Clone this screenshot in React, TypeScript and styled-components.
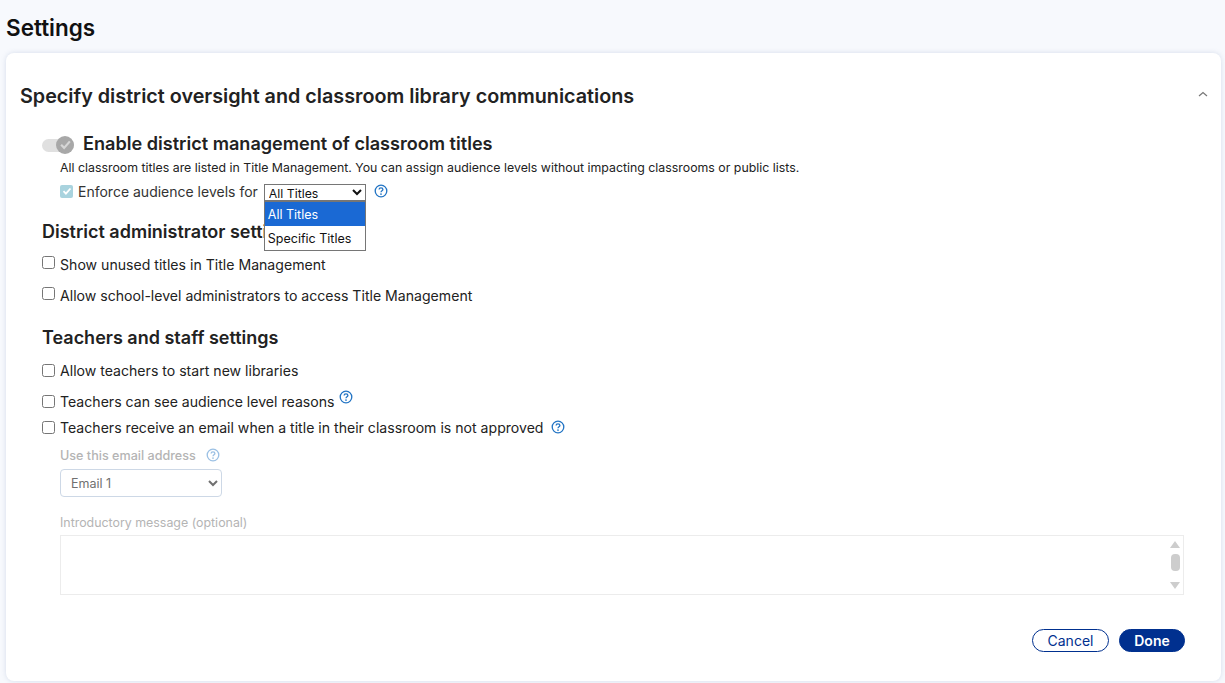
import styled, { createGlobalStyle } from 'styled-components';

const GlobalStyle = createGlobalStyle`
  html, body {
    margin: 0;
    padding: 0;
    background: #f7f9fd;
  }
  body {
    font-family: "Inter", "Liberation Sans", sans-serif;
    color: #1f1f1f;
    height: 683px;
    overflow: hidden;
  }
`;

const Page = styled.div`
  padding: 0 4px 0 6px;
`;

const Title = styled.h1`
  margin: 0;
  height: 53px;
  font-size: 22.5px;
  font-weight: 600;
  line-height: 55px;
  color: #111;
`;

const Card = styled.section`
  height: 628px;
  box-sizing: border-box;
  background: #fff;
  border-radius: 8px;
  box-shadow: 0 0 5px rgba(120, 140, 180, 0.25);
  padding: 30px 14px 0 14px;
`;

const CardHeader = styled.div`
  display: flex;
  justify-content: space-between;
  align-items: center;
  height: 26px;
`;

const CardTitle = styled.h2`
  margin: 0;
  font-size: 19.76px;
  font-weight: 600;
  color: #222;
`;

const Collapse = styled.svg`
  width: 10px;
  height: 6px;
  margin: 0 -1px 5px 0;
  fill: none;
  stroke: #777;
  stroke-width: 1.2;
`;

const Body = styled.div`
  padding: 24px 0 0 22px;
`;

const ToggleRow = styled.div`
  display: flex;
  align-items: center;
  gap: 9px;
  height: 24px;
`;

const Toggle = styled.span`
  position: relative;
  display: block;
  width: 32px;
  height: 13px;
  border-radius: 7px;
  background: #e0e0e0;
`;

const Knob = styled.span`
  position: absolute;
  right: 0;
  top: -3px;
  width: 18px;
  height: 18px;
  border-radius: 50%;
  background: #a8a8a8;
  display: flex;
  align-items: center;
  justify-content: center;
`;

const ToggleLabel = styled.span`
  font-size: 18.1px;
  font-weight: 600;
  color: #222;
  margin-bottom: 5px;
`;

const Indented = styled.div`
  padding-left: 18px;
`;

const Note = styled.div`
  font-size: 12.35px;
  line-height: 18px;
  margin-top: 2px;
  color: #222;
`;

const EnforceRow = styled.div`
  display: flex;
  align-items: center;
  height: 20px;
  margin-top: 4px;
  font-size: 14px;
  color: #333;
`;

const CheckedBox = styled.span`
  width: 13px;
  height: 13px;
  margin-right: 5px;
  border-radius: 2px;
  background: #a9d3de;
  display: flex;
  align-items: center;
  justify-content: center;
`;

const DropWrap = styled.div`
  position: relative;
  margin: 3px 8px 0 6px;
`;

const MiniSelect = styled.select`
  display: block;
  width: 102px;
  height: 17px;
  padding: 0;
  font-family: inherit;
  font-size: 12.3px;
  color: #111;
  background: #fff;
  border: 1px solid #767676;
  border-radius: 0;
`;

const DropList = styled.div`
  position: absolute;
  left: 0;
  top: 17px;
  width: 102px;
  box-sizing: border-box;
  background: #fff;
  border: 1px solid #767676;
  z-index: 2;
`;

const DropItem = styled.div<{ $active?: boolean }>`
  height: 24px;
  padding-left: 3px;
  line-height: 25px;
  font-size: 12.5px;
  color: ${p => (p.$active ? '#fff' : '#111')};
  background: ${p => (p.$active ? '#1a69d4' : '#fff')};
`;

const Help = styled.svg<{ $faded?: boolean }>`
  width: 14px;
  height: 14px;
  flex: none;
  opacity: ${p => (p.$faded ? 0.45 : 1)};
`;

const SectionTitle = styled.h3<{ $top: number }>`
  margin: ${p => p.$top}px 0 0;
  font-size: 18px;
  line-height: 24px;
  font-weight: 600;
  color: #222;
`;

const OptionRow = styled.label<{ $height: number }>`
  display: flex;
  align-items: center;
  height: ${p => p.$height}px;
  font-size: 14.1px;
  color: #222;
`;

const Box = styled.input.attrs({ type: 'checkbox' })<{ $lift?: boolean }>`
  width: 13px;
  height: 13px;
  margin: 0 5px ${p => (p.$lift ? 3 : 0)}px 0;
`;

const HelpGap = styled.span<{ $raised?: boolean }>`
  display: flex;
  margin-left: ${p => (p.$raised ? 5 : 7)}px;
  margin-bottom: ${p => (p.$raised ? 8 : 0)}px;
`;

const FieldLabel = styled.div`
  display: flex;
  align-items: center;
  gap: 10px;
  margin-top: 4px;
  font-size: 12.6px;
  font-weight: 500;
  color: #b4b4b4;
  height: 18px;
`;

const EmailSelect = styled.select`
  display: block;
  width: 162px;
  height: 28px;
  margin-top: 5px;
  padding: 0 6px;
  font-family: inherit;
  font-size: 12.5px;
  color: #707070;
  background: #fff;
  border: 1px solid #cdd8e6;
  border-radius: 4px;
`;

const OptionalLabel = styled.div`
  margin-top: 17px;
  font-size: 12.4px;
  line-height: 18px;
  color: #b4b4b4;
`;

const MessageBox = styled.div`
  display: flex;
  justify-content: flex-end;
  height: 60px;
  margin-top: 3px;
  margin-right: 23px;
  box-sizing: border-box;
  border: 1px solid #ececec;
`;

const ScrollRail = styled.div`
  width: 16px;
  display: flex;
  flex-direction: column;
  align-items: center;
  justify-content: space-between;
  padding: 5px 0;
`;

const ScrollThumb = styled.div`
  width: 9px;
  height: 17px;
  margin-bottom: 5px;
  border-radius: 4px;
  background: #cdcdcd;
`;

const Arrow = styled.div<{ $down?: boolean }>`
  width: 0;
  height: 0;
  border-left: 5px solid transparent;
  border-right: 5px solid transparent;
  ${p => (p.$down ? 'border-top: 7px solid #cdcdcd;' : 'border-bottom: 7px solid #cdcdcd;')}
`;

const Actions = styled.div`
  display: flex;
  justify-content: flex-end;
  gap: 10px;
  margin-top: 34px;
  margin-right: 22px;
`;

const Button = styled.button<{ $primary?: boolean }>`
  height: 23px;
  padding: 0;
  width: ${p => (p.$primary ? 66 : 77)}px;
  border-radius: 12px;
  border: 1px solid #00308f;
  font-family: inherit;
  font-size: 14px;
  font-weight: ${p => (p.$primary ? 600 : 400)};
  color: ${p => (p.$primary ? '#fff' : '#00308f')};
  background: ${p => (p.$primary ? '#00308f' : '#fff')};
`;

function HelpIcon({ faded }: { faded?: boolean }) {
  return (
    <Help viewBox="0 0 14 14" $faded={faded}>
      <circle cx="7" cy="7" r="5.8" fill="none" stroke="#2274c4" strokeWidth="1.3" />
      <path d="M5.1 5.6c0-1 .9-1.7 1.9-1.7s1.9.7 1.9 1.6c0 1.3-1.9 1.3-1.9 2.7" fill="none" stroke="#2274c4" strokeWidth="1.3" />
      <circle cx="7" cy="10.1" r=".85" fill="#2274c4" />
    </Help>
  );
}

function Tick({ size, color }: { size: number; color: string }) {
  return (
    <svg width={size} height={size} viewBox="0 0 12 12">
      <path d="M2.5 6.2l2.4 2.5 4.6-5.2" fill="none" stroke={color} strokeWidth="1.8" />
    </svg>
  );
}

function App() {
  return (
    <Page>
      <GlobalStyle />
      <Title>Settings</Title>
      <Card>
        <CardHeader>
          <CardTitle>Specify district oversight and classroom library communications</CardTitle>
          <Collapse viewBox="0 0 10 6">
            <path d="M1 5L5 1.5 9 5" />
          </Collapse>
        </CardHeader>
        <Body>
          <ToggleRow>
            <Toggle>
              <Knob><Tick size={15} color="#d6d6d6" /></Knob>
            </Toggle>
            <ToggleLabel>Enable district management of classroom titles</ToggleLabel>
          </ToggleRow>
          <Indented>
            <Note>All classroom titles are listed in Title Management. You can assign audience levels without impacting classrooms or public lists.</Note>
            <EnforceRow>
              <CheckedBox><Tick size={12} color="#fff" /></CheckedBox>
              Enforce audience levels for
              <DropWrap>
                <MiniSelect defaultValue="All Titles">
                  <option>All Titles</option>
                  <option>Specific Titles</option>
                </MiniSelect>
                <DropList>
                  <DropItem $active>All Titles</DropItem>
                  <DropItem>Specific Titles</DropItem>
                </DropList>
              </DropWrap>
              <HelpIcon />
            </EnforceRow>
          </Indented>

          <SectionTitle $top={19}>District administrator settings</SectionTitle>
          <OptionRow $height={40}><Box $lift />Show unused titles in Title Management</OptionRow>
          <OptionRow $height={22}><Box $lift />Allow school-level administrators to access Title Management</OptionRow>

          <SectionTitle $top={20}>Teachers and staff settings</SectionTitle>
          <OptionRow $height={40}><Box />Allow teachers to start new libraries</OptionRow>
          <OptionRow $height={22}>
            <Box />Teachers can see audience level reasons
            <HelpGap $raised><HelpIcon /></HelpGap>
          </OptionRow>
          <OptionRow $height={30}>
            <Box />Teachers receive an email when a title in their classroom is not approved
            <HelpGap><HelpIcon /></HelpGap>
          </OptionRow>

          <Indented>
            <FieldLabel>Use this email address <HelpIcon faded /></FieldLabel>
            <EmailSelect defaultValue="Email 1">
              <option>Email 1</option>
            </EmailSelect>
            <OptionalLabel>Introductory message (optional)</OptionalLabel>
            <MessageBox>
              <ScrollRail>
                <Arrow />
                <ScrollThumb />
                <Arrow $down />
              </ScrollRail>
            </MessageBox>
          </Indented>
          <Actions>
            <Button>Cancel</Button>
            <Button $primary>Done</Button>
          </Actions>
        </Body>
      </Card>
    </Page>
  );
}

export default App;
